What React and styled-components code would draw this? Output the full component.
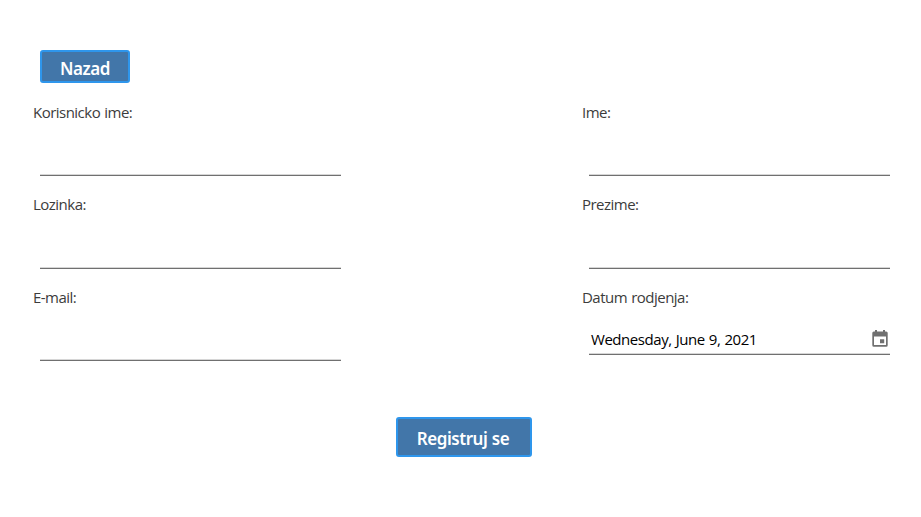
import React from "react";
import styled, { createGlobalStyle } from "styled-components";

const GlobalStyle = createGlobalStyle`
  *, *::before, *::after { box-sizing: border-box; }
  body { margin: 0; background: #fff; font-family: "Open Sans", "Noto Sans", sans-serif; }
`;

const Page = styled.main`
  width: 921px;
  height: 517px;
  padding: 50px 31px 0 33px;
  display: flex;
  flex-direction: column;
  background: #fff;
`;

const Button = styled.button`
  width: ${(p) => p.$width}px;
  height: ${(p) => p.$height}px;
  padding: ${(p) => p.$top}px 2px 0 0;
  border: 2px solid #2e96ec;
  border-radius: 3px;
  background: #4276a9;
  color: #fff;
  font: 600 17px/24px "Noto Sans", "Open Sans", sans-serif;
  letter-spacing: -0.45px;
  word-spacing: 0.5px;
  display: flex;
  align-items: center;
  justify-content: center;
`;

const BackButton = styled(Button)`
  margin-left: 7px;
  padding-right: 0;
`;

const SubmitButton = styled(Button)`
  margin: 32px 0 0 363px;
`;

const Form = styled.form`
  margin-top: 19px;
  display: grid;
  grid-template-columns: 308px 308px;
  grid-template-rows: 92px 93px 98px;
  justify-content: space-between;
`;

const Field = styled.label`
  display: flex;
  flex-direction: column;
`;

const Label = styled.span`
  width: max-content;
  height: 20px;
  font-size: 15px;
  line-height: 20px;
  letter-spacing: -0.52px;
  word-spacing: 0.8px;
  color: #3c3c3c;
  white-space: nowrap;
`;

const InputRow = styled.span`
  height: 34px;
  margin: ${(p) => p.$gap}px 0 0 7px;
  border-bottom: 1px solid #707070;
  box-shadow: inset 0 -1px #d6d6d6;
  display: flex;
  align-items: center;
  justify-content: space-between;
  padding: 2px 2px 0;
`;

const Input = styled.input`
  width: 100%;
  border: 0;
  outline: 0;
  background: transparent;
  font: 15px "Open Sans", "Noto Sans", sans-serif;
`;

const DateText = styled.span`
  font-size: 15px;
  line-height: 20px;
  letter-spacing: -0.45px;
  word-spacing: 0.6px;
  color: #000;
`;

const CalendarIcon = () => (
  <svg width="16" height="17" viewBox="0 0 16 17" fill="#707070">
    <path d="M14.2 1.5H13V0h-2v1.5H5V0H3v1.5H1.8A1.5 1.5 0 0 0 .3 3v12.3a1.5 1.5 0 0 0 1.5 1.5h12.4a1.5 1.5 0 0 0 1.5-1.5V3a1.5 1.5 0 0 0-1.5-1.5zM14 15.1H2V6.4h12zM8 9.2h4.2v4H8z" />
  </svg>
);

const TextField = ({ label, type = "text", gap = 20 }) => (
  <Field>
    <Label>{label}</Label>
    <InputRow $gap={gap}><Input type={type} /></InputRow>
  </Field>
);

export default function App() {
  return (
    <>
      <GlobalStyle />
      <Page>
        <BackButton type="button" $width={90} $height={33} $top={4}>Nazad</BackButton>
        <Form>
          <TextField label="Korisnicko ime:" />
          <TextField label="Ime:" />
          <TextField label="Lozinka:" type="password" gap={21} />
          <TextField label="Prezime:" gap={21} />
          <TextField label="E-mail:" type="email" />
          <Field>
            <Label>Datum rodjenja:</Label>
            <InputRow $gap={14}>
              <DateText>Wednesday, June 9, 2021</DateText>
              <CalendarIcon />
            </InputRow>
          </Field>
        </Form>
        <SubmitButton type="button" $width={136} $height={40} $top={3}>Registruj se</SubmitButton>
      </Page>
    </>
  );
}
